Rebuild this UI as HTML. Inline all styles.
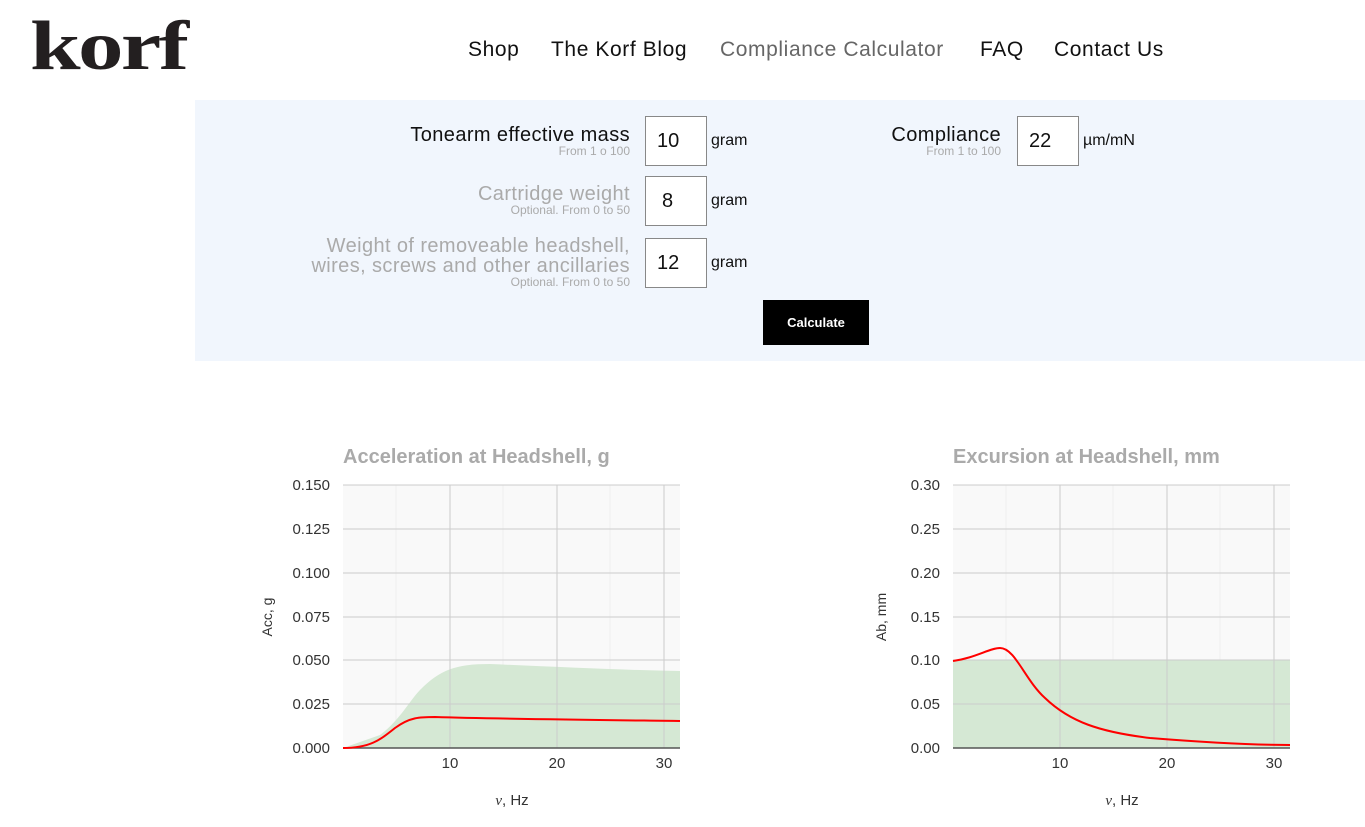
<!DOCTYPE html>
<html><head><style>
body{margin:0;width:1365px;height:827px;background:#fff;font-family:"Liberation Sans",sans-serif;position:relative;overflow:hidden}
.a{position:absolute}
.logo{left:30px;top:2px;font-family:"Liberation Serif",serif;font-weight:bold;font-size:70px;color:#231f20;letter-spacing:-2px;line-height:90px;transform:scaleX(1.3);transform-origin:left}
.nav{top:38px;font-size:21px;color:#111;letter-spacing:0.6px}
.panel{left:195px;top:100px;width:1170px;height:261px;background:#f1f6fd}
.lab{text-align:right;font-size:20px;line-height:20px;color:#111;letter-spacing:0.4px}
.lab.g{color:#aaa}
.lab small{display:block;font-size:12px;color:#aaa;line-height:12px;letter-spacing:0}
.in{border:1px solid #888;background:#fff;font-size:20px;line-height:48px;padding-left:11px;box-sizing:border-box;width:62px;height:50px;color:#111}
.u{font-size:16px;color:#111}
.btn{left:763px;top:300px;width:106px;height:45px;background:#000;color:#fff;font-weight:bold;font-size:13px;text-align:center;line-height:45px}
svg text{font-family:"Liberation Sans",sans-serif}
</style></head><body>
<div class="a logo">korf</div>
<div class="a nav" style="left:468px">Shop</div>
<div class="a nav" style="left:551px">The Korf Blog</div>
<div class="a nav" style="left:720px;color:#666">Compliance Calculator</div>
<div class="a nav" style="left:980px">FAQ</div>
<div class="a nav" style="left:1054px">Contact Us</div>
<div class="a panel"></div>
<div class="a lab" style="right:735px;top:125px">Tonearm effective mass<small>From 1 o 100</small></div>
<div class="a in" style="left:645px;top:116px">10</div><div class="a u" style="left:711px;top:132px">gram</div>
<div class="a lab" style="right:364px;top:125px">Compliance<small>From 1 to 100</small></div>
<div class="a in" style="left:1017px;top:116px">22</div><div class="a u" style="left:1083px;top:132px">µm/mN</div>
<div class="a lab g" style="right:735px;top:184px">Cartridge weight<small>Optional. From 0 to 50</small></div>
<div class="a in" style="left:645px;top:176px;padding-left:16px">8</div><div class="a u" style="left:711px;top:192px">gram</div>
<div class="a lab g" style="right:735px;top:236px">Weight of removeable headshell,<br>wires, screws and other ancillaries<small>Optional. From 0 to 50</small></div>
<div class="a in" style="left:645px;top:238px">12</div><div class="a u" style="left:711px;top:254px">gram</div>
<div class="a btn">Calculate</div>

<svg class="a" style="left:0;top:0" width="1365" height="827">
<g font-size="15" fill="#333">
<text x="343" y="463" font-size="20" font-weight="bold" fill="#aaa">Acceleration at Headshell, g</text>
<rect x="343" y="485" width="337" height="263" fill="#f9f9f9"/>
<g stroke="#eee"><line x1="396" y1="485" x2="396" y2="748"/><line x1="503" y1="485" x2="503" y2="748"/><line x1="610" y1="485" x2="610" y2="748"/></g>
<path d="M343 748 L380 735 C400 720 410 700 420 690 C440 670 455 664 490 664 C560 667 620 670 680 671 L680 748Z" fill="#d5e8d4"/>
<g stroke="#ccc"><line x1="343" y1="485" x2="680" y2="485"/><line x1="343" y1="529" x2="680" y2="529"/><line x1="343" y1="573" x2="680" y2="573"/><line x1="343" y1="617" x2="680" y2="617"/><line x1="343" y1="660" x2="680" y2="660"/><line x1="343" y1="704" x2="680" y2="704"/><line x1="450" y1="485" x2="450" y2="748"/><line x1="557" y1="485" x2="557" y2="748"/><line x1="664" y1="485" x2="664" y2="748"/></g>
<line x1="343" y1="748" x2="680" y2="748" stroke="#555" stroke-width="1.5"/>
<path d="M343 748 C370 748 380 740 395 728 C410 717 420 717 435 717 C500 719 600 720 680 721" fill="none" stroke="red" stroke-width="2"/>
<text x="330" y="490" text-anchor="end">0.150</text><text x="330" y="534" text-anchor="end">0.125</text><text x="330" y="578" text-anchor="end">0.100</text><text x="330" y="622" text-anchor="end">0.075</text><text x="330" y="665" text-anchor="end">0.050</text><text x="330" y="709" text-anchor="end">0.025</text><text x="330" y="753" text-anchor="end">0.000</text>
<text x="450" y="768" text-anchor="middle">10</text><text x="557" y="768" text-anchor="middle">20</text><text x="664" y="768" text-anchor="middle">30</text>
<text x="512" y="805" text-anchor="middle"><tspan font-style="italic" font-family="Liberation Serif">ν</tspan>, Hz</text>
<text transform="translate(272 617) rotate(-90)" text-anchor="middle" font-size="14">Acc, g</text>

<text x="953" y="463" font-size="20" font-weight="bold" fill="#aaa">Excursion at Headshell, mm</text>
<rect x="953" y="485" width="337" height="263" fill="#f9f9f9"/>
<g stroke="#eee"><line x1="1006" y1="485" x2="1006" y2="748"/><line x1="1113" y1="485" x2="1113" y2="748"/><line x1="1220" y1="485" x2="1220" y2="748"/></g>
<rect x="953" y="660" width="337" height="88" fill="#d5e8d4"/>
<g stroke="#ccc"><line x1="953" y1="485" x2="1290" y2="485"/><line x1="953" y1="529" x2="1290" y2="529"/><line x1="953" y1="573" x2="1290" y2="573"/><line x1="953" y1="617" x2="1290" y2="617"/><line x1="953" y1="660" x2="1290" y2="660"/><line x1="953" y1="704" x2="1290" y2="704"/><line x1="1060" y1="485" x2="1060" y2="748"/><line x1="1167" y1="485" x2="1167" y2="748"/><line x1="1274" y1="485" x2="1274" y2="748"/></g>
<line x1="953" y1="748" x2="1290" y2="748" stroke="#555" stroke-width="1.5"/>
<path d="M953 661 C975 658 990 648 1000 648 C1015 648 1025 680 1045 698 C1070 722 1100 732 1150 738 C1200 742 1250 745 1290 745" fill="none" stroke="red" stroke-width="2"/>
<text x="940" y="490" text-anchor="end">0.30</text><text x="940" y="534" text-anchor="end">0.25</text><text x="940" y="578" text-anchor="end">0.20</text><text x="940" y="622" text-anchor="end">0.15</text><text x="940" y="665" text-anchor="end">0.10</text><text x="940" y="709" text-anchor="end">0.05</text><text x="940" y="753" text-anchor="end">0.00</text>
<text x="1060" y="768" text-anchor="middle">10</text><text x="1167" y="768" text-anchor="middle">20</text><text x="1274" y="768" text-anchor="middle">30</text>
<text x="1122" y="805" text-anchor="middle"><tspan font-style="italic" font-family="Liberation Serif">ν</tspan>, Hz</text>
<text transform="translate(886 617) rotate(-90)" text-anchor="middle" font-size="14">Ab, mm</text>
</g>
</svg>
</body></html>
